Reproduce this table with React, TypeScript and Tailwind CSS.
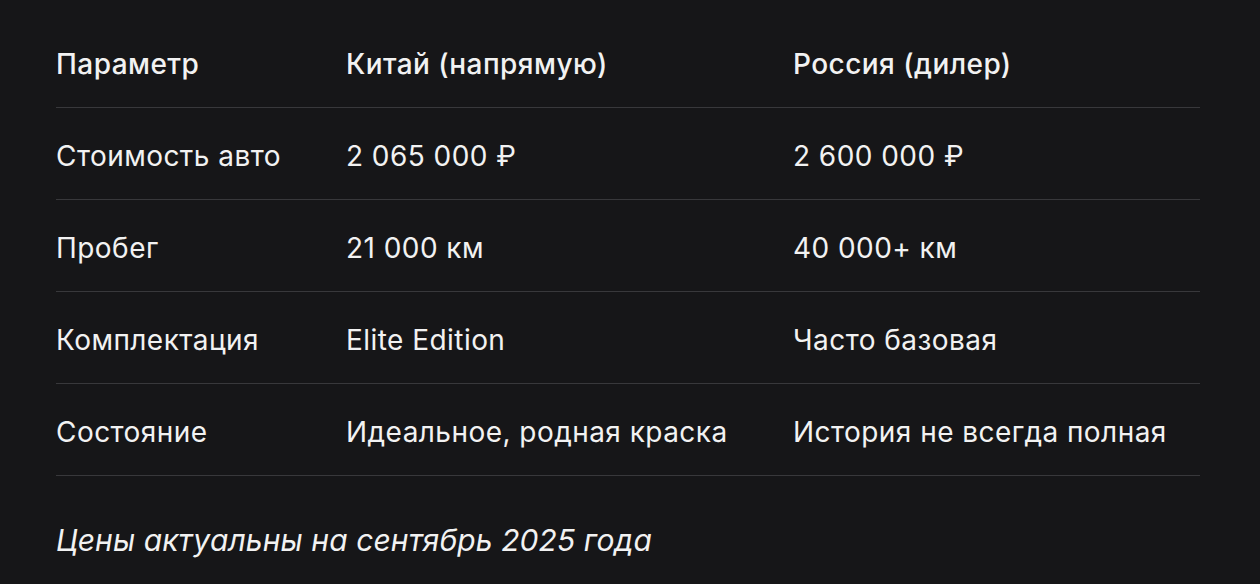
const rows: [string, string, string][] = [
  ["Стоимость авто", "2 065 000 ₽", "2 600 000 ₽"],
  ["Пробег", "21 000 км", "40 000+ км"],
  ["Комплектация", "Elite Edition", "Часто базовая"],
  ["Состояние", "Идеальное, родная краска", "История не всегда полная"],
];

const Row = ({ cells, head }: { cells: [string, string, string]; head?: boolean }) => (
  <div
    className={`grid grid-cols-[290px_447px_1fr] items-center h-[92px] border-b border-[#38383b] ${
      head ? "font-medium" : ""
    }`}
  >
    {cells.map((c, i) => (
      <div key={i} className="pt-1 whitespace-nowrap">
        {c}
      </div>
    ))}
  </div>
);

export default function App() {
  return (
    <div className="min-h-[584px] bg-[#161618] text-[#f2f2f2] font-['Inter',sans-serif] text-[28px] leading-[36px] tracking-[0.45px] pl-14 pr-[60px] pt-4">
      <Row head cells={["Параметр", "Китай (напрямую)", "Россия (дилер)"]} />
      {rows.map((r) => (
        <Row key={r[0]} cells={r} />
      ))}
      <p className="italic text-[30px] tracking-[0.1px] mt-[46px]">Цены актуальны на сентябрь 2025 года</p>
    </div>
  );
}
